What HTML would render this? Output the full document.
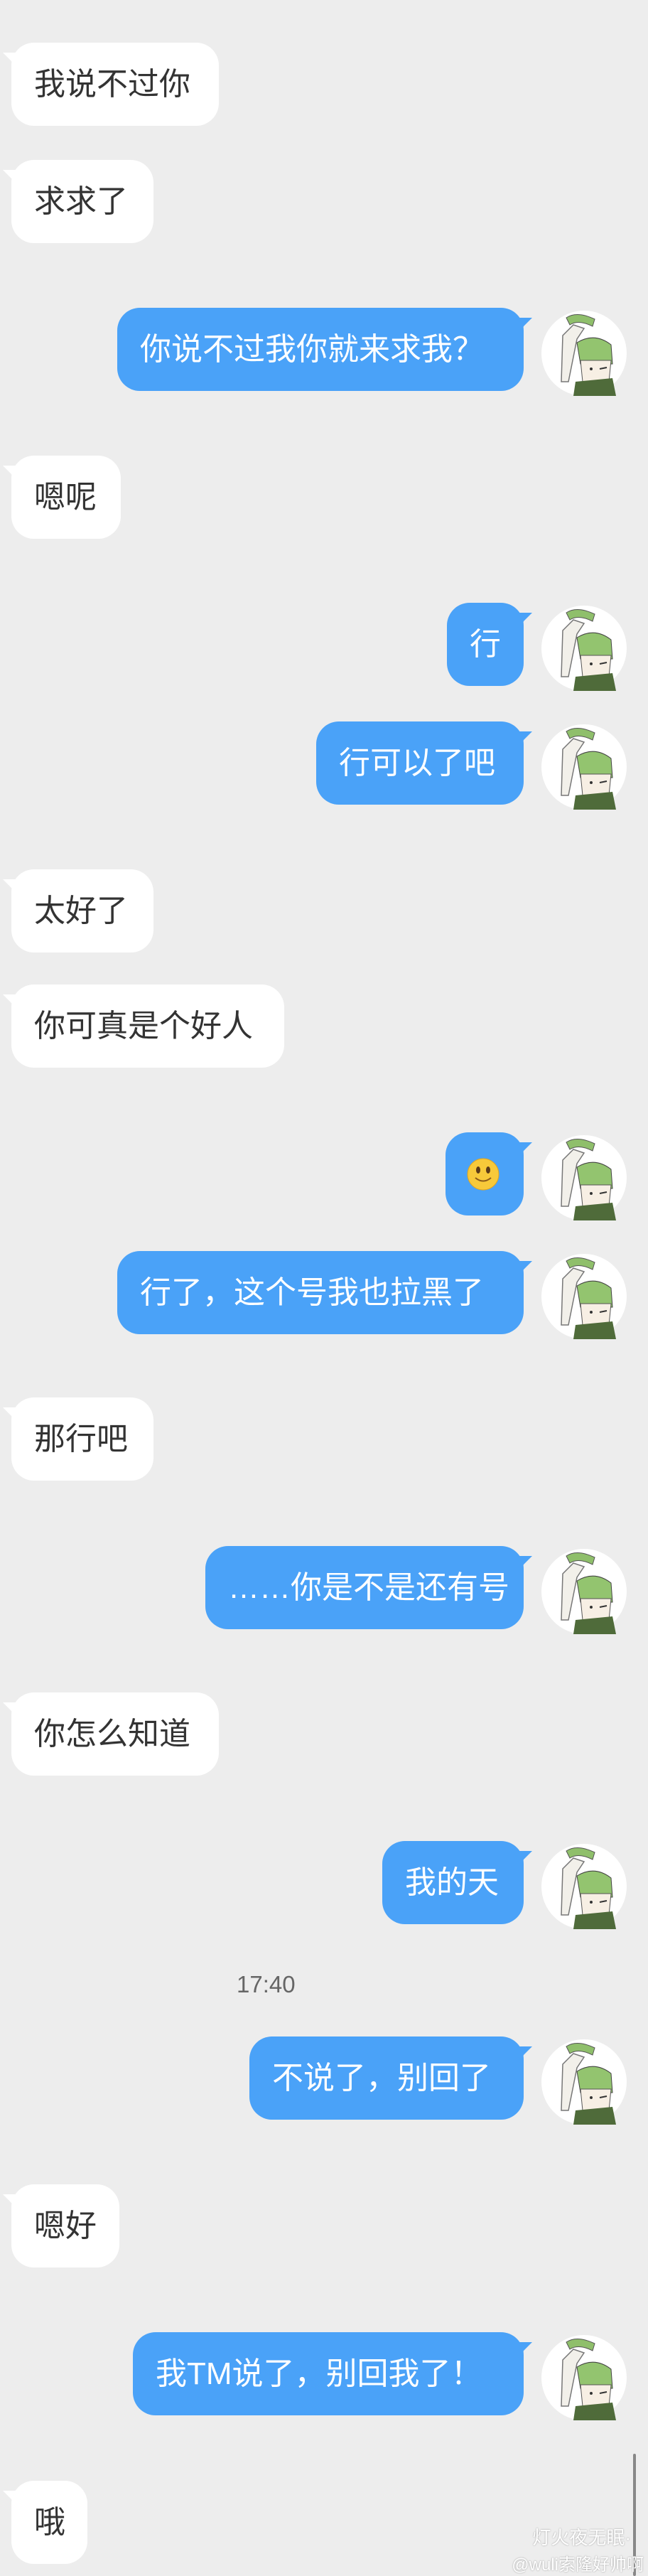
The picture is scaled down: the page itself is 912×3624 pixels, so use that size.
<!DOCTYPE html>
<html><head><meta charset="utf-8"><style>
body{margin:0;width:912px;height:3624px;background:#ededed;position:relative;overflow:hidden;font-family:"Liberation Sans","Noto Sans CJK SC",sans-serif}
.b{position:absolute;height:117px;border-radius:32px;font-size:44px;line-height:117px;white-space:nowrap;box-sizing:border-box}
.l{left:16px;background:#fff;color:#333;padding-left:32px}
.r{right:175px;background:#4aa2f8;color:#fff;padding-left:32px}
.l::before{content:"";position:absolute;left:-12px;top:14px;width:30px;height:30px;background:#fff;clip-path:polygon(0 0,100% 0,100% 100%,60% 100%,40% 40%)}
.r::after{content:"";position:absolute;right:-12px;top:14px;width:30px;height:30px;background:#4aa2f8;clip-path:polygon(0 0,100% 0,60% 40%,40% 100%,0 100%)}
.av{position:absolute;left:762px;width:120px;height:120px}
.t{position:absolute;left:333px;top:2773px;font-size:33px;color:#666}
</style></head><body>
<svg width="0" height="0" style="position:absolute"><defs><g id="a">
<circle cx="60" cy="60" r="60" fill="#fff"/>
<path d="M30 35 L45 20 L60 25 L50 40 L38 100 L28 100 Z" fill="#f2f0ea" stroke="#777" stroke-width="1.5"/>
<path d="M35 10 Q50 0 75 12 L72 22 Q52 12 40 20 Z" fill="#8fbf6b" stroke="#555"/>
<path d="M50 45 Q75 30 98 48 L100 75 L55 75 Z" fill="#93c46f" stroke="#444"/>
<path d="M55 70 L98 70 L95 100 Q75 112 58 100 Z" fill="#f7efe4" stroke="#555"/>
<path d="M48 100 L100 95 L105 120 L45 120 Z" fill="#4f6b3a"/>
<circle cx="70" cy="82" r="2" fill="#333"/><path d="M82 82 L92 80" stroke="#333" stroke-width="2"/>
</g></defs></svg>

<div class="b l" style="top:60px;width:292px">我说不过你</div>
<div class="b l" style="top:225px;width:200px">求求了</div>
<div class="b r" style="top:433px;width:572px">你说不过我你就来求我？</div>
<svg class="av" style="top:437px"><use href="#a"/></svg>
<div class="b l" style="top:641px;width:154px">嗯呢</div>
<div class="b r" style="top:848px;width:108px">行</div>
<svg class="av" style="top:852px"><use href="#a"/></svg>
<div class="b r" style="top:1015px;width:292px">行可以了吧</div>
<svg class="av" style="top:1019px"><use href="#a"/></svg>
<div class="b l" style="top:1223px;width:200px">太好了</div>
<div class="b l" style="top:1385px;width:384px">你可真是个好人</div>
<div class="b r" style="top:1593px;width:110px"><svg style="position:absolute;left:30px;top:36px" width="46" height="46"><circle cx="23" cy="23" r="22" fill="#f7c93a" stroke="#e0a520"/><ellipse cx="16" cy="17" rx="3" ry="5" fill="#5a3a1a"/><ellipse cx="30" cy="17" rx="3" ry="5" fill="#5a3a1a"/><path d="M12 28 Q23 37 34 28" stroke="#8a5a1a" stroke-width="2" fill="none"/></svg></div>
<svg class="av" style="top:1597px"><use href="#a"/></svg>
<div class="b r" style="top:1760px;width:572px">行了，这个号我也拉黑了</div>
<svg class="av" style="top:1764px"><use href="#a"/></svg>
<div class="b l" style="top:1966px;width:200px">那行吧</div>
<div class="b r" style="top:2175px;width:448px">……你是不是还有号</div>
<svg class="av" style="top:2179px"><use href="#a"/></svg>
<div class="b l" style="top:2381px;width:292px">你怎么知道</div>
<div class="b r" style="top:2590px;width:199px">我的天</div>
<svg class="av" style="top:2594px"><use href="#a"/></svg>
<div class="t">17:40</div>
<div class="b r" style="top:2865px;width:386px">不说了，别回了</div>
<svg class="av" style="top:2869px"><use href="#a"/></svg>
<div class="b l" style="top:3073px;width:152px">嗯好</div>
<div class="b r" style="top:3281px;width:550px">我TM说了，别回我了！</div>
<svg class="av" style="top:3285px"><use href="#a"/></svg>
<div class="b l" style="top:3490px;width:107px">哦</div>
<div style="position:absolute;left:891px;top:3452px;width:4px;height:172px;background:#888;border-radius:2px"></div>
<div style="position:absolute;right:24px;top:3550px;font-size:26px;color:#fff;text-shadow:0 0 2px #999">灯火夜无眠·</div>
<div style="position:absolute;right:6px;top:3588px;font-size:24px;color:#fff;text-shadow:0 0 2px #999">@wuli索隆好帅啊</div>
</body></html>
